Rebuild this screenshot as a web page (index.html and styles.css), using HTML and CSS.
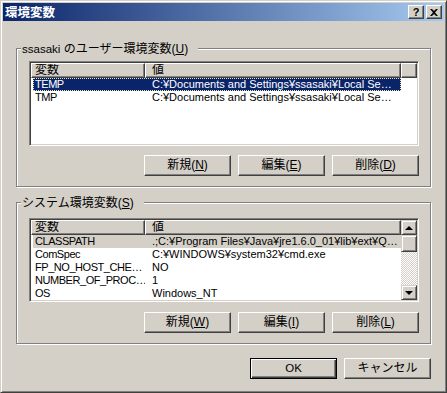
FILE: index.html
```html
<!DOCTYPE html>
<html lang="ja">
<head>
<meta charset="utf-8">
<title>環境変数</title>
<link rel="stylesheet" href="styles.css">
</head>
<body>
<div class="window">
  <div class="titlebar">
    <span class="title">環境変数</span>
    <div class="tb-buttons">
      <span class="tb-btn help">?</span>
      <span class="tb-btn close"><svg width="8" height="7" viewBox="0 0 8 7"><path d="M0 0h2l2 2 2-2h2L5 3.5 8 7H6L4 5 2 7H0l3-3.5z" fill="#000"/></svg></span>
    </div>
  </div>
  <div class="body">
    <div class="group g1">
      <div class="legend"><span class="lat">ssasaki</span> のユーザー環境変数(<u>U</u>)</div>
      <div class="listview lv1">
        <div class="lv-header">
          <div class="hcell c1">変数</div>
          <div class="hcell c2">値</div>
          <div class="hcell fill"></div>
        </div>
        <div class="row selected"><span class="c1">TEMP</span><span class="c2">C:¥Documents and Settings¥ssasaki¥Local Se…</span></div>
        <div class="row"><span class="c1">TMP</span><span class="c2">C:¥Documents and Settings¥ssasaki¥Local Se…</span></div>
      </div>
      <div class="btn-row">
        <button class="btn">新規(<u>N</u>)</button>
        <button class="btn">編集(<u>E</u>)</button>
        <button class="btn">削除(<u>D</u>)</button>
      </div>
    </div>
    <div class="group g2">
      <div class="legend">システム環境変数(<u>S</u>)</div>
      <div class="listview lv2">
        <div class="lv-main">
          <div class="lv-header">
            <div class="hcell c1">変数</div>
            <div class="hcell c2">値</div>
          </div>
          <div class="row inactive"><span class="c1">CLASSPATH</span><span class="c2">.;C:¥Program Files¥Java¥jre1.6.0_01¥lib¥ext¥Q…</span></div>
          <div class="row"><span class="c1">ComSpec</span><span class="c2">C:¥WINDOWS¥system32¥cmd.exe</span></div>
          <div class="row"><span class="c1">FP_NO_HOST_CHE…</span><span class="c2">NO</span></div>
          <div class="row"><span class="c1">NUMBER_OF_PROC…</span><span class="c2">1</span></div>
          <div class="row"><span class="c1">OS</span><span class="c2">Windows_NT</span></div>
          <div class="row"><span class="c1">Path</span><span class="c2">C:¥WINDOWS¥system32;C:¥WINDOWS;C:¥WINDOWS¥S…</span></div>
        </div>
        <div class="scrollbar">
          <div class="sb-btn"><span class="arrow up"></span></div>
          <div class="sb-thumb"></div>
          <div class="sb-track"></div>
          <div class="sb-btn"><span class="arrow down"></span></div>
        </div>
      </div>
      <div class="btn-row">
        <button class="btn">新規(<u>W</u>)</button>
        <button class="btn">編集(<u>I</u>)</button>
        <button class="btn">削除(<u>L</u>)</button>
      </div>
    </div>
    <div class="dlg-row">
      <button class="btn default"><span class="lat">OK</span></button>
      <button class="btn">キャンセル</button>
    </div>
  </div>
</div>
</body>
</html>
```
FILE: styles.css
```css
html, body {
  margin: 0;
  padding: 0;
  background: #d4d0c8;
}
body {
  font-family: "Liberation Sans", "Noto Sans CJK JP", sans-serif;
  font-size: 12px;
  color: #000;
}
.lat {
  font-size: 11.5px;
}
.window {
  width: 447px;
  height: 393px;
  box-sizing: border-box;
  border: 1px solid;
  border-color: #d4d0c8 #404040 #404040 #d4d0c8;
  box-shadow: inset 1px 1px 0 #fff, inset -1px -1px 0 #808080;
  padding: 2px;
  background: #d4d0c8;
}
.titlebar {
  height: 18px;
  background: linear-gradient(to right, #0a246a, #a6caf0);
  display: flex;
  align-items: center;
  justify-content: space-between;
  padding: 0 2px 0 2px;
}
.title {
  color: #fff;
  font-weight: bold;
  font-size: 12.5px;
  line-height: 18px;
  font-family: "Noto Sans CJK JP", sans-serif;
}
.tb-buttons {
  display: flex;
  gap: 2px;
}
.tb-btn {
  width: 16px;
  height: 14px;
  box-sizing: border-box;
  border: 1px solid;
  border-color: #fff #404040 #404040 #fff;
  box-shadow: inset -1px -1px 0 #808080;
  background: #d4d0c8;
  display: flex;
  align-items: center;
  justify-content: center;
  color: #000;
}
.help {
  font-weight: bold;
  font-size: 11px;
  line-height: 12px;
  font-family: "Liberation Sans", sans-serif;
  padding-bottom: 1px;
}
.body {
  padding: 0 13px;
}
.group {
  border: 1px solid #808080;
  box-shadow: 1px 1px 0 #fff, inset 1px 1px 0 #fff;
  padding: 0 11px 10px 12px;
}
.g1 {
  margin-top: 27px;
}
.g2 {
  margin-top: 15px;
}
.legend {
  width: fit-content;
  background: #d4d0c8;
  line-height: 14px;
  height: 14px;
  margin: -7px 0 0 -8px;
  padding: 0 10px 0 1px;
  white-space: nowrap;
}
.listview {
  height: 85px;
  box-sizing: border-box;
  border: 1px solid;
  border-color: #808080 #fff #fff #808080;
  box-shadow: inset 1px 1px 0 #404040, inset -1px -1px 0 #d4d0c8;
  padding: 1px;
  background: #fff;
  overflow: hidden;
}
.lv1 {
  margin-top: 5px;
}
.lv2 {
  margin-top: 8px;
  height: 84px;
  display: grid;
  grid-template-columns: 1fr 16px;
}
.lv-main {
  overflow: hidden;
  min-width: 0;
}
.lv-header {
  display: flex;
  height: 15px;
}
.hcell {
  box-sizing: border-box;
  border: 1px solid;
  border-color: #fff #404040 #404040 #fff;
  box-shadow: inset -1px -1px 0 #808080;
  background: #d4d0c8;
  line-height: 12px;
  font-size: 12px;
  white-space: nowrap;
  overflow: hidden;
}
.hcell.c1 {
  width: 114px;
  padding-left: 3px;
}
.hcell.c2 {
  width: 256px;
  padding-left: 6px;
}
.hcell.fill {
  flex: 1;
}
.row {
  display: flex;
  width: 368px;
  margin-left: 2px;
  height: 13px;
  line-height: 13px;
  font-size: 11px;
  white-space: nowrap;
  box-sizing: border-box;
}
.row .c1 {
  width: 112px;
  padding-left: 2px;
  letter-spacing: -0.45px;
  overflow: hidden;
  box-sizing: border-box;
}
.row .c2 {
  flex: 1;
  padding-left: 7px;
  overflow: hidden;
  box-sizing: border-box;
}
.row.selected {
  background: #0a246a;
  color: #fff;
  outline: 1px dotted #f0e6a0;
  outline-offset: -1px;
}
.row.inactive {
  background: #d4d0c8;
}
.scrollbar {
  display: flex;
  flex-direction: column;
}
.sb-btn,
.sb-thumb {
  box-sizing: border-box;
  border: 1px solid;
  border-color: #d4d0c8 #404040 #404040 #d4d0c8;
  box-shadow: inset 1px 1px 0 #fff, inset -1px -1px 0 #808080;
  background: #d4d0c8;
}
.sb-btn {
  height: 15px;
  display: flex;
  align-items: center;
  justify-content: center;
}
.sb-thumb {
  height: 17px;
}
.sb-track {
  flex: 1;
  background: repeating-conic-gradient(#fff 0 25%, #d4d0c8 0 50%) 0 0 / 2px 2px;
}
.arrow {
  width: 0;
  height: 0;
  border-left: 4px solid transparent;
  border-right: 4px solid transparent;
}
.arrow.up {
  border-bottom: 4px solid #000;
}
.arrow.down {
  border-top: 4px solid #000;
}
.btn-row {
  display: flex;
  justify-content: flex-end;
  gap: 7px;
  margin-top: 9px;
}
.g2 .btn-row {
  margin-top: 10px;
}
.btn {
  width: 87px;
  height: 21px;
  box-sizing: border-box;
  border: 1px solid;
  border-color: #fff #404040 #404040 #fff;
  box-shadow: inset -1px -1px 0 #808080;
  background: #d4d0c8;
  font-family: "Liberation Sans", "Noto Sans CJK JP", sans-serif;
  font-size: 12px;
  color: #000;
  padding: 0;
  line-height: 17px;
}
.btn.default {
  border-color: #000;
  box-shadow: inset 1px 1px 0 #fff, inset -1px -1px 0 #404040, inset -2px -2px 0 #808080;
}
.dlg-row {
  display: flex;
  justify-content: flex-end;
  gap: 7px;
  margin-top: 14px;
}
```
